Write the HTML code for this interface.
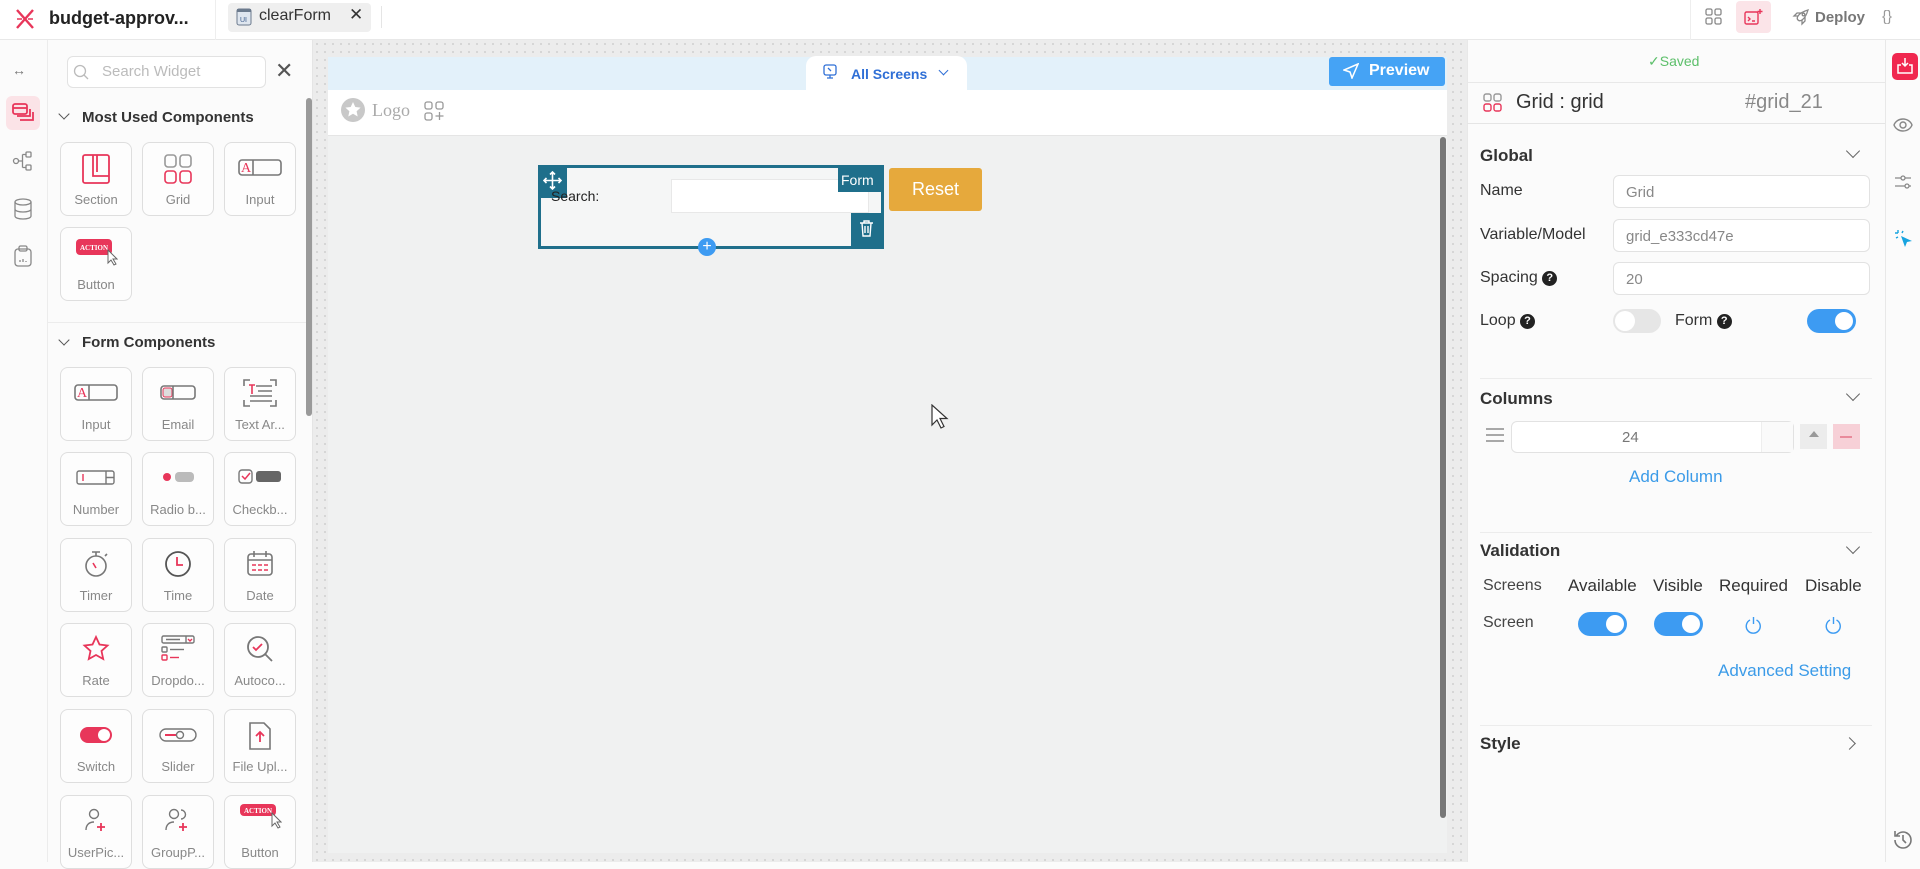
<!DOCTYPE html>
<html><head><meta charset="utf-8">
<style>
*{box-sizing:border-box;margin:0;padding:0}
body{width:1920px;height:862px;overflow:hidden;position:relative;background:#fbfbfb;font-family:"Liberation Sans",sans-serif;color:#333}
.a{position:absolute}
.card{position:absolute;width:72px;height:74px;border:1.5px solid #dedede;border-radius:8px;background:#fdfdfd}
.card .lb{position:absolute;left:0;right:0;bottom:8px;text-align:center;font-size:13px;color:#888;white-space:nowrap;overflow:hidden}
.card svg{position:absolute;left:50%;top:10px;transform:translateX(-50%)}
.lbl{position:absolute;font-size:16px;color:#333}
.inp{position:absolute;left:1613px;width:257px;height:33px;border:1px solid #e2e2e2;border-radius:6px;background:#fff;font-size:15px;color:#888;padding:8px 12px}
.hd{position:absolute;left:1480px;font-size:17px;font-weight:bold;color:#333}
.chev{position:absolute;left:1848px;width:10px;height:10px;border-right:1.5px solid #666;border-bottom:1.5px solid #666;transform:rotate(45deg)}
.tg{position:absolute;width:49px;height:24px;border-radius:12px;background:#3d9bf2}
.tg::after{content:"";position:absolute;right:3px;top:3px;width:18px;height:18px;border-radius:50%;background:#fff}
.hr{position:absolute;height:1px;background:#ececec}
</style></head><body>

<!-- top bar -->
<div class="a" style="left:0;top:0;width:1920px;height:40px;background:#fff;border-bottom:1px solid #e8e8e8"></div>
<svg class="a" style="left:14px;top:8px" width="22" height="22" viewBox="0 0 22 22" fill="none" stroke="#e8365a" stroke-width="2.4"><path d="M3 2 L19 20 M19 2 L3 20"/><path d="M3 11 L8 11 M14 11 L19 11" stroke-width="1.6"/></svg>
<div class="a" style="left:49px;top:8px;font-size:18px;font-weight:bold;color:#222">budget-approv...</div>
<div class="a" style="left:215px;top:0;width:1px;height:40px;background:#eee"></div>
<div class="a" style="left:228px;top:3px;width:143px;height:29px;background:#efefef;border-radius:4px"></div>
<svg class="a" style="left:236px;top:8px" width="16" height="18" viewBox="0 0 16 18"><rect x="1" y="1" width="14" height="16" rx="2" fill="#dfe6ef" stroke="#6b7a8d"/><rect x="1" y="1" width="14" height="3" fill="#6b7a8d"/><text x="4" y="14" font-size="7" fill="#3a5a8a" font-family="Liberation Sans">UI</text></svg>
<div class="a" style="left:259px;top:7px;font-size:16px;color:#333">clearForm</div>
<div class="a" style="left:349px;top:5px;font-size:17px;color:#333">✕</div>
<div class="a" style="left:381px;top:6px;width:1px;height:22px;background:#e5e5e5"></div>
<div class="a" style="left:1690px;top:0;width:1px;height:40px;background:#eee"></div>
<svg class="a" style="left:1705px;top:8px" width="18" height="18" viewBox="0 0 18 18" fill="none" stroke="#888" stroke-width="1.3"><rect x="1" y="1" width="6" height="6" rx="1.5"/><rect x="10" y="1" width="6" height="6" rx="1.5"/><rect x="1" y="10" width="6" height="6" rx="1.5"/><rect x="10" y="10" width="6" height="6" rx="1.5"/></svg>
<div class="a" style="left:1736px;top:1px;width:35px;height:32px;background:#fbe4e8;border-radius:4px"></div>
<svg class="a" style="left:1744px;top:8px" width="20" height="18" viewBox="0 0 20 18" fill="none" stroke="#e8365a" stroke-width="1.4"><rect x="1" y="4" width="13" height="12" rx="1.5"/><path d="M4 9l2 2-2 2M8 13h3"/><path d="M16 1v5M13.5 3.5h5"/></svg>
<svg class="a" style="left:1792px;top:8px" width="18" height="18" viewBox="0 0 18 18" fill="none" stroke="#888" stroke-width="1.3"><path d="M6 12c-2-2 0-7 10-10-3 10-8 12-10 10z"/><path d="M6 8L2 8l3-3h4M10 12v4l3-3V9"/><circle cx="11.5" cy="6.5" r="1.3"/></svg>
<div class="a" style="left:1815px;top:9px;font-size:15px;font-weight:bold;color:#777">Deploy</div>
<div class="a" style="left:1882px;top:8px;font-size:15px;color:#999">{&#8203;}</div>

<!-- left rail -->
<div class="a" style="left:0;top:40px;width:48px;height:822px;background:#fbfbfb;border-right:1px solid #ececec"></div>
<div class="a" style="left:12px;top:62px;font-size:14px;color:#777;letter-spacing:-1px">↔</div>
<div class="a" style="left:6px;top:96px;width:34px;height:34px;background:#fbe3e7;border-radius:6px"></div>
<svg class="a" style="left:12px;top:103px" width="22" height="20" viewBox="0 0 22 20" fill="none" stroke="#e8365a" stroke-width="1.8"><rect x="1" y="1" width="14" height="10" rx="2"/><path d="M1 5h14"/><path d="M5 13h13V6M8 17h13V9"/></svg>
<svg class="a" style="left:12px;top:150px" width="22" height="22" viewBox="0 0 22 22" fill="none" stroke="#888" stroke-width="1.3"><circle cx="4" cy="11" r="2.5"/><rect x="14" y="2" width="5" height="5" rx="1"/><rect x="14" y="15" width="5" height="5" rx="1"/><path d="M6.5 11h4M10.5 4.5v13M10.5 4.5H14M10.5 17.5H14"/></svg>
<svg class="a" style="left:13px;top:198px" width="20" height="22" viewBox="0 0 20 22" fill="none" stroke="#888" stroke-width="1.3"><ellipse cx="10" cy="4" rx="8" ry="3"/><path d="M2 4v14c0 2 4 3 8 3s8-1 8-3V4M2 11c0 2 4 3 8 3s8-1 8-3"/></svg>
<svg class="a" style="left:14px;top:245px" width="18" height="22" viewBox="0 0 18 22" fill="none" stroke="#888" stroke-width="1.3"><rect x="1" y="4" width="16" height="17" rx="3"/><rect x="5" y="1" width="8" height="5" rx="1.5"/><path d="M6 17v-2M9 17v-3M12 17v-1"/></svg>

<!-- widget panel -->
<div class="a" style="left:48px;top:40px;width:265px;height:822px;background:#fbfbfb;border-right:1px solid #e5e5e5"></div>
<div class="a" style="left:67px;top:56px;width:199px;height:32px;border:1px solid #e2e2e2;border-radius:6px;background:#fff"></div>
<svg class="a" style="left:73px;top:64px" width="16" height="16" viewBox="0 0 16 16" fill="none" stroke="#bbb" stroke-width="1.3"><circle cx="7" cy="7" r="5.5"/><path d="M11 11l4 4"/></svg>
<div class="a" style="left:102px;top:63px;font-size:15px;color:#bbb">Search Widget</div>
<div class="a" style="left:275px;top:58px;font-size:22px;color:#555">✕</div>
<div class="a" style="left:306px;top:98px;width:6px;height:318px;background:#9a9a9a;border-radius:3px"></div>
<div class="a" style="left:60px;top:110px;width:8px;height:8px;border-right:1.3px solid #555;border-bottom:1.3px solid #555;transform:rotate(45deg)"></div>
<div class="a" style="left:82px;top:109px;font-size:15px;font-weight:bold;color:#333">Most Used Components</div>

<div class="card" style="left:60px;top:142px"><svg width="30" height="32" viewBox="0 0 30 32" fill="none" stroke="#e8365a" stroke-width="1.8"><rect x="2" y="2" width="26" height="28" rx="2"/><path d="M12 2v21h16M16 2v17"/></svg><div class="lb">Section</div></div>
<div class="card" style="left:142px;top:142px"><svg width="30" height="32" viewBox="0 0 30 32" fill="none" stroke-width="1.6"><rect x="2" y="2" width="11" height="12" rx="3" stroke="#999"/><rect x="17" y="2" width="11" height="12" rx="3" stroke="#999"/><rect x="2" y="18" width="11" height="12" rx="3" stroke="#e8365a"/><rect x="17" y="18" width="11" height="12" rx="3" stroke="#e8365a"/></svg><div class="lb">Grid</div></div>
<div class="card" style="left:224px;top:142px"><svg width="44" height="22" viewBox="0 0 44 22" fill="none" stroke-width="1.6" style="top:14px"><rect x="1" y="3" width="42" height="15" rx="3" stroke="#777"/><text x="3" y="15" font-size="14" fill="#e8365a" stroke="none" font-family="Liberation Serif">A</text><path d="M15 3v15" stroke="#777"/></svg><div class="lb">Input</div></div>
<div class="card" style="left:60px;top:227px"><svg width="44" height="30" viewBox="0 0 44 30" style="top:9px"><rect x="2" y="2" width="36" height="16" rx="4" fill="#e8365a"/><text x="6" y="13" font-size="7" fill="#fff" font-family="Liberation Serif" font-weight="bold">ACTION</text><path d="M34 13l0 13 3-3 3 5 2-1-3-5h4z" fill="#fff" stroke="#666" stroke-width="1"/></svg><div class="lb">Button</div></div>

<div class="hr" style="left:48px;top:322px;width:258px"></div>
<div class="a" style="left:60px;top:336px;width:8px;height:8px;border-right:1.3px solid #555;border-bottom:1.3px solid #555;transform:rotate(45deg)"></div>
<div class="a" style="left:82px;top:334px;font-size:15px;font-weight:bold;color:#333">Form Components</div>

<!-- form cards -->
<div class="card" style="left:60px;top:367px"><svg width="44" height="22" viewBox="0 0 44 22" fill="none" stroke-width="1.6" style="top:14px"><rect x="1" y="3" width="42" height="15" rx="3" stroke="#777"/><text x="3" y="15" font-size="14" fill="#e8365a" stroke="none" font-family="Liberation Serif">A</text><path d="M15 3v15" stroke="#777"/></svg><div class="lb">Input</div></div>
<div class="card" style="left:142px;top:367px"><svg width="36" height="20" viewBox="0 0 36 20" fill="none" stroke-width="1.6" style="top:15px"><rect x="1" y="3" width="34" height="13" rx="3" stroke="#777"/><rect x="3" y="5" width="9" height="9" rx="2" fill="#ddd" stroke="#e8365a" stroke-width="1"/><path d="M13 3v13" stroke="#777"/></svg><div class="lb">Email</div></div>
<div class="card" style="left:224px;top:367px"><svg width="36" height="30" viewBox="0 0 36 30" fill="none" stroke="#777" stroke-width="1.6"><path d="M2 8V2h6M28 2h6v6M2 22v6h6M28 28h6v-6M14 8h16M16 13h14M8 18h22M8 23h22"/><path d="M7 7h6M10 7v9" stroke="#e8365a"/></svg><div class="lb">Text Ar...</div></div>

<div class="card" style="left:60px;top:452px"><svg width="40" height="20" viewBox="0 0 40 20" fill="none" stroke-width="1.4" style="top:15px"><rect x="1" y="3" width="37" height="13" rx="2" stroke="#777"/><path d="M30 3v13M30 9.5h8" stroke="#777"/><path d="M7 6v7" stroke="#e8365a"/></svg><div class="lb">Number</div></div>
<div class="card" style="left:142px;top:452px"><svg width="36" height="14" viewBox="0 0 36 14" style="top:17px"><circle cx="7" cy="7" r="4" fill="#e8365a"/><rect x="15" y="2" width="19" height="10" rx="4" fill="#bbb"/></svg><div class="lb">Radio b...</div></div>
<div class="card" style="left:224px;top:452px"><svg width="44" height="16" viewBox="0 0 44 16" style="top:16px"><rect x="1" y="1" width="13" height="13" rx="3" fill="none" stroke="#777" stroke-width="1.4"/><path d="M4 7l3 3 5-6" stroke="#e8365a" stroke-width="1.5" fill="none"/><rect x="18" y="2" width="25" height="11" rx="3" fill="#666"/></svg><div class="lb">Checkb...</div></div>

<div class="card" style="left:60px;top:538px"><svg width="28" height="30" viewBox="0 0 28 30" fill="none" stroke="#777" stroke-width="1.6"><circle cx="14" cy="17" r="10"/><path d="M10 3h8M14 3v4M23 7l2-2"/><path d="M11 14l3 5" stroke="#e8365a"/></svg><div class="lb">Timer</div></div>
<div class="card" style="left:142px;top:538px"><svg width="28" height="30" viewBox="0 0 28 30" fill="none" stroke="#555" stroke-width="1.8"><circle cx="14" cy="15" r="12"/><path d="M13 8v8h6" stroke="#e8365a"/></svg><div class="lb">Time</div></div>
<div class="card" style="left:224px;top:538px"><svg width="28" height="30" viewBox="0 0 28 30" fill="none" stroke="#777" stroke-width="1.6"><rect x="2" y="5" width="24" height="21" rx="3"/><path d="M2 11h24M8 2v6M20 2v6"/><path d="M6 16h4M12 16h4M18 16h4M6 21h4M12 21h4M18 21h4" stroke="#e8365a"/></svg><div class="lb">Date</div></div>

<div class="card" style="left:60px;top:623px"><svg width="30" height="30" viewBox="0 0 30 30" fill="none" stroke="#e8365a" stroke-width="1.8"><path d="M15 3l3.5 7.5 8 1-6 5.5 1.7 8L15 21l-7.2 4 1.7-8-6-5.5 8-1z"/></svg><div class="lb">Rate</div></div>
<div class="card" style="left:142px;top:623px"><svg width="36" height="30" viewBox="0 0 36 30" fill="none" stroke="#777" stroke-width="1.4"><rect x="2" y="2" width="32" height="7" rx="1.5"/><path d="M26 2v7M6 5.5h14"/><path d="M28 5l2 2 2-2" stroke="#e8365a"/><rect x="2" y="13" width="5" height="5" rx="1"/><path d="M10 15.5h14"/><rect x="2" y="21" width="5" height="5" rx="1" stroke="#e8365a"/><path d="M10 23.5h9" stroke="#e8365a"/></svg><div class="lb">Dropdo...</div></div>
<div class="card" style="left:224px;top:623px"><svg width="30" height="30" viewBox="0 0 30 30" fill="none" stroke="#777" stroke-width="1.8"><circle cx="13" cy="13" r="10"/><path d="M20 20l7 7"/><path d="M8 13l3 3 6-6" stroke="#e8365a"/></svg><div class="lb">Autoco...</div></div>

<div class="card" style="left:60px;top:709px"><svg width="34" height="18" viewBox="0 0 34 18" style="top:16px"><rect x="1" y="1" width="32" height="16" rx="8" fill="#e8365a"/><circle cx="25" cy="9" r="6" fill="#fff"/></svg><div class="lb">Switch</div></div>
<div class="card" style="left:142px;top:709px"><svg width="38" height="16" viewBox="0 0 38 16" style="top:17px" fill="none" stroke="#777" stroke-width="1.4"><rect x="1" y="2" width="36" height="12" rx="6"/><path d="M6 8h11" stroke="#e8365a" stroke-width="2"/><circle cx="21" cy="8" r="3.5"/></svg><div class="lb">Slider</div></div>
<div class="card" style="left:224px;top:709px"><svg width="26" height="32" viewBox="0 0 26 32" fill="none" stroke="#777" stroke-width="1.6"><path d="M3 3h14l6 6v20H3z"/><path d="M13 22V12M9 16l4-4 4 4" stroke="#e8365a" stroke-width="1.8"/></svg><div class="lb">File Upl...</div></div>

<div class="card" style="left:60px;top:795px"><svg width="30" height="30" viewBox="0 0 30 30" fill="none" stroke="#777" stroke-width="1.4"><circle cx="13" cy="8" r="4.5"/><path d="M5 24c0-5 3-8 8-8"/><path d="M20 17v8M16 21h8" stroke="#e8365a" stroke-width="1.8"/></svg><div class="lb">UserPic...</div></div>
<div class="card" style="left:142px;top:795px"><svg width="30" height="30" viewBox="0 0 30 30" fill="none" stroke="#777" stroke-width="1.4"><circle cx="11" cy="8" r="4.5"/><path d="M18 4a4.5 4.5 0 010 9M3 24c0-5 3-8 8-8"/><path d="M20 17v8M16 21h8" stroke="#e8365a" stroke-width="1.8"/></svg><div class="lb">GroupP...</div></div>
<div class="card" style="left:224px;top:795px"><svg width="44" height="30" viewBox="0 0 44 30" style="top:6px"><rect x="2" y="2" width="36" height="12" rx="4" fill="#e8365a"/><text x="6" y="11" font-size="7" fill="#fff" font-family="Liberation Serif" font-weight="bold">ACTION</text><path d="M34 11l0 13 3-3 3 5 2-1-3-5h4z" fill="#fff" stroke="#666" stroke-width="1"/></svg><div class="lb">Button</div></div>

<!-- canvas -->
<div class="a" style="left:313px;top:40px;width:1154px;height:822px;background-color:#ececec;background-image:radial-gradient(#cfcfcf 0.9px,transparent 1px);background-size:8px 8px"></div>
<div class="a" style="left:328px;top:57px;width:1119px;height:33px;background:#e3f1fa"></div>
<div class="a" style="left:806px;top:56px;width:161px;height:34px;background:#fff;border-radius:10px 10px 0 0"></div>
<svg class="a" style="left:823px;top:64px" width="14" height="16" viewBox="0 0 14 16" fill="none" stroke="#2f6fd6" stroke-width="1.3"><rect x="1" y="1" width="12" height="10" rx="2"/><path d="M7 11v3M4 14h6M5 4l3 3"/></svg>
<div class="a" style="left:851px;top:66px;font-size:14px;font-weight:bold;color:#2f6fd6">All Screens</div>
<div class="a" style="left:940px;top:67px;width:7px;height:7px;border-right:1.4px solid #2f6fd6;border-bottom:1.4px solid #2f6fd6;transform:rotate(45deg)"></div>
<div class="a" style="left:1329px;top:57px;width:116px;height:29px;background:#45a3f5;border-radius:3px"></div>
<svg class="a" style="left:1343px;top:63px" width="16" height="16" viewBox="0 0 16 16" fill="none" stroke="#fff" stroke-width="1.5"><path d="M15 1L1 7l6 2 2 6z"/></svg>
<div class="a" style="left:1369px;top:62px;font-size:16px;font-weight:bold;color:#fff">Preview</div>
<div class="a" style="left:328px;top:90px;width:1119px;height:46px;background:#fff;border-bottom:1px solid #e5e5e5"></div>
<svg class="a" style="left:340px;top:97px" width="26" height="26" viewBox="0 0 26 26"><circle cx="13" cy="13" r="12" fill="#c8c8c8"/><path d="M13 5l2.3 5 5.3.6-4 3.6 1.1 5.3L13 16.8 8.3 19.5l1.1-5.3-4-3.6 5.3-.6z" fill="#fff"/></svg>
<div class="a" style="left:372px;top:100px;font-family:'Liberation Serif',serif;font-size:18px;color:#aaa">Logo</div>
<svg class="a" style="left:424px;top:101px" width="20" height="20" viewBox="0 0 20 20" fill="none" stroke="#999" stroke-width="1.3"><rect x="1" y="1" width="7" height="7" rx="2"/><rect x="12" y="1" width="7" height="7" rx="2"/><rect x="1" y="12" width="7" height="7" rx="2"/><path d="M15.5 11v8M11.5 15h8"/></svg>
<div class="a" style="left:328px;top:136px;width:1119px;height:717px;background:#f0f1f1"></div>
<div class="a" style="left:1440px;top:137px;width:6px;height:681px;background:#777;border-radius:3px"></div>

<!-- form grid -->
<div class="a" style="left:538px;top:165px;width:346px;height:84px;border:3px solid #1f6f8b;background:#f5f6f6"></div>
<div class="a" style="left:538px;top:165px;width:29px;height:33px;background:#1f6f8b"></div>
<svg class="a" style="left:543px;top:171px" width="19" height="19" viewBox="0 0 19 19" fill="none" stroke="#fff" stroke-width="1.6"><path d="M9.5 1v17M1 9.5h17M7 3.5l2.5-2.5 2.5 2.5M7 15.5l2.5 2.5 2.5-2.5M3.5 7L1 9.5 3.5 12M15.5 7L18 9.5 15.5 12"/></svg>
<div class="a" style="left:671px;top:179px;width:198px;height:34px;background:#fff;border:1px solid #e8e8e8"></div>
<div class="a" style="left:551px;top:188px;font-size:14px;color:#222">Search:</div>
<div class="a" style="left:838px;top:168px;width:44px;height:24px;background:#1f6f8b"></div>
<div class="a" style="left:841px;top:172px;font-size:14px;color:#fff">Form</div>
<div class="a" style="left:851px;top:213px;width:33px;height:36px;background:#1f6f8b"></div>
<svg class="a" style="left:859px;top:219px" width="15" height="18" viewBox="0 0 15 18" fill="none" stroke="#fff" stroke-width="1.4"><path d="M1 4h13M5 4V2h5v2M3 4l1 13h7l1-13M6 7v7M9 7v7"/></svg>
<div class="a" style="left:698px;top:238px;width:18px;height:18px;border-radius:50%;background:#3d9bf2;color:#fff;font-size:16px;line-height:17px;text-align:center">+</div>
<div class="a" style="left:889px;top:168px;width:93px;height:43px;background:#e6a93c;border-radius:3px;color:#fff;font-size:18px;text-align:center;line-height:43px">Reset</div>
<svg class="a" style="left:931px;top:404px" width="18" height="26" viewBox="0 0 18 26"><path d="M1 1v20l5-5 4 8 3-1.5-4-8h7z" fill="#fff" stroke="#333" stroke-width="1.2"/></svg>

<!-- right panel -->
<div class="a" style="left:1467px;top:40px;width:418px;height:822px;background:#fbfbfb;border-left:1px solid #e8e8e8"></div>
<div class="a" style="left:1648px;top:53px;font-size:14px;color:#5cbf6a">✓Saved</div>
<div class="hr" style="left:1467px;top:82px;width:418px;background:#e8e8e8"></div>
<svg class="a" style="left:1483px;top:93px" width="19" height="19" viewBox="0 0 19 19" fill="none" stroke-width="1.4"><rect x="1" y="1" width="7" height="7" rx="2" stroke="#999"/><rect x="11" y="1" width="7" height="7" rx="2" stroke="#999"/><rect x="1" y="11" width="7" height="7" rx="2" stroke="#e8365a"/><rect x="11" y="11" width="7" height="7" rx="2" stroke="#e8365a"/></svg>
<div class="a" style="left:1516px;top:91px;font-size:20px;color:#333">Grid : grid</div>
<div class="a" style="left:1745px;top:91px;font-size:20px;color:#888">#grid_21</div>
<div class="hr" style="left:1467px;top:123px;width:418px;background:#e5e5e5"></div>

<div class="hd" style="top:146px">Global</div><div class="chev" style="top:146px"></div>
<div class="lbl" style="left:1480px;top:182px">Name</div><div class="inp" style="top:175px">Grid</div>
<div class="lbl" style="left:1480px;top:226px">Variable/Model</div><div class="inp" style="top:219px">grid_e333cd47e</div>
<div class="lbl" style="left:1480px;top:269px">Spacing <span style="display:inline-block;width:15px;height:15px;border-radius:50%;background:#222;color:#fff;font-size:11px;text-align:center;line-height:15px;font-weight:bold;vertical-align:1px">?</span></div><div class="inp" style="top:262px">20</div>
<div class="lbl" style="left:1480px;top:312px">Loop <span style="display:inline-block;width:15px;height:15px;border-radius:50%;background:#222;color:#fff;font-size:11px;text-align:center;line-height:15px;font-weight:bold;vertical-align:1px">?</span></div>
<div class="a" style="left:1613px;top:309px;width:48px;height:24px;border-radius:12px;background:#e6e6e6"><div style="position:absolute;left:2px;top:2px;width:20px;height:20px;border-radius:50%;background:#fff"></div></div>
<div class="lbl" style="left:1675px;top:312px">Form <span style="display:inline-block;width:15px;height:15px;border-radius:50%;background:#222;color:#fff;font-size:11px;text-align:center;line-height:15px;font-weight:bold;vertical-align:1px">?</span></div>
<div class="tg" style="left:1807px;top:309px"></div>
<div class="hr" style="left:1480px;top:378px;width:392px"></div>

<div class="hd" style="top:389px">Columns</div><div class="chev" style="top:389px"></div>
<svg class="a" style="left:1486px;top:428px" width="18" height="14" viewBox="0 0 18 14" stroke="#777" stroke-width="1.3"><path d="M0 1h18M0 7h18M0 13h18"/></svg>
<div class="a" style="left:1511px;top:421px;width:283px;height:32px;border:1px solid #e2e2e2;border-radius:6px;background:#fff"></div>
<div class="a" style="left:1761px;top:422px;width:32px;height:30px;border-left:1px solid #eee;background:#fafafa"></div>
<div class="a" style="left:1622px;top:429px;font-size:15px;color:#777">24</div>
<div class="a" style="left:1800px;top:424px;width:27px;height:25px;background:#ececec"></div>
<div class="a" style="left:1809px;top:431px;width:0;height:0;border-left:5px solid transparent;border-right:5px solid transparent;border-bottom:6px solid #999"></div>
<div class="a" style="left:1833px;top:424px;width:27px;height:25px;background:#f7d0d7"></div>
<div class="a" style="left:1840px;top:436px;width:12px;height:1.5px;background:#e98a9b"></div>
<div class="a" style="left:1629px;top:467px;font-size:17px;color:#3b9be8">Add Column</div>
<div class="hr" style="left:1480px;top:532px;width:392px"></div>

<div class="hd" style="top:541px">Validation</div><div class="chev" style="top:542px"></div>
<div class="lbl" style="left:1483px;top:577px;color:#444">Screens</div>
<div class="lbl" style="left:1568px;top:576px;font-size:17px">Available</div>
<div class="lbl" style="left:1653px;top:576px;font-size:17px">Visible</div>
<div class="lbl" style="left:1719px;top:576px;font-size:17px">Required</div>
<div class="lbl" style="left:1805px;top:576px;font-size:17px">Disable</div>
<div class="lbl" style="left:1483px;top:614px;color:#444">Screen</div>
<div class="tg" style="left:1578px;top:612px"></div>
<div class="tg" style="left:1654px;top:612px"></div>
<svg class="a" style="left:1745px;top:616px" width="17" height="18" viewBox="0 0 17 18" fill="none" stroke="#3d9bf2" stroke-width="1.4"><path d="M5 4a7 7 0 106.5 0M8.5 1v7"/></svg>
<svg class="a" style="left:1825px;top:616px" width="17" height="18" viewBox="0 0 17 18" fill="none" stroke="#3d9bf2" stroke-width="1.4"><path d="M5 4a7 7 0 106.5 0M8.5 1v7"/></svg>
<div class="a" style="left:1718px;top:661px;font-size:17px;color:#3b9be8">Advanced Setting</div>
<div class="hr" style="left:1480px;top:725px;width:392px"></div>
<div class="hd" style="top:734px">Style</div>
<div class="a" style="left:1845px;top:739px;width:9px;height:9px;border-right:1.5px solid #666;border-bottom:1.5px solid #666;transform:rotate(-45deg)"></div>

<!-- right rail -->
<div class="a" style="left:1885px;top:40px;width:35px;height:822px;background:#fbfbfb;border-left:1px solid #e8e8e8"></div>
<div class="a" style="left:1892px;top:53px;width:26px;height:27px;background:#f0274f;border-radius:5px"></div>
<svg class="a" style="left:1896px;top:57px" width="18" height="18" viewBox="0 0 18 18" fill="none" stroke="#fff" stroke-width="1.5"><path d="M9 1v8M6 6l3 3 3-3M5 8H2v8h14V8h-3"/></svg>
<svg class="a" style="left:1893px;top:117px" width="20" height="16" viewBox="0 0 20 16" fill="none" stroke="#888" stroke-width="1.4"><path d="M1 8c3-8 15-8 18 0-3 8-15 8-18 0z"/><circle cx="10" cy="8" r="3"/></svg>
<svg class="a" style="left:1894px;top:174px" width="18" height="16" viewBox="0 0 18 16" fill="none" stroke="#888" stroke-width="1.3"><path d="M1 4h6M11 4h6M1 12h10M15 12h2"/><circle cx="9" cy="4" r="2"/><circle cx="13" cy="12" r="2"/></svg>
<svg class="a" style="left:1894px;top:229px" width="20" height="20" viewBox="0 0 20 20"><path d="M7 7l11 5-5 1-2 5z" fill="#17a4e0"/><path d="M4 1v3M1 4h3M9 2l-1 2M2 9l2-1" stroke="#17a4e0" stroke-width="1.4"/></svg>
<svg class="a" style="left:1892px;top:829px" width="22" height="22" viewBox="0 0 22 22" fill="none" stroke="#777" stroke-width="1.6"><path d="M3 11a8 8 0 108-8c-3 0-5 1.5-6.5 3.5M3 2v5h5"/><path d="M11 6v5l3 3"/></svg>
</body></html>
